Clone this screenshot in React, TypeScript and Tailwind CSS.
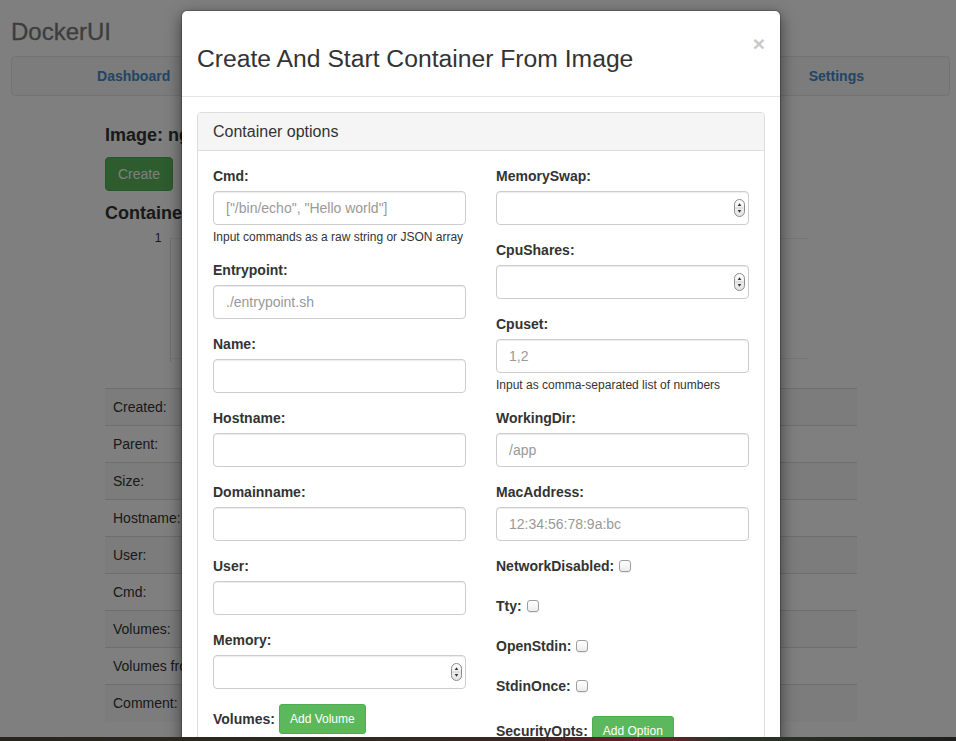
import React from 'react';

const navItems = ['Dashboard', 'Containers', 'Images', 'Settings'];
const infoRows = ['Created:', 'Parent:', 'Size:', 'Hostname:', 'User:', 'Cmd:', 'Volumes:', 'Volumes from:', 'Comment:'];

function Spinner() {
  return (
    <svg width="11" height="18" viewBox="0 0 11 18">
      <defs>
        <linearGradient id="spin" x1="0" y1="0" x2="0" y2="1">
          <stop offset="0" stopColor="#fdfdfd" />
          <stop offset="1" stopColor="#e2e2e2" />
        </linearGradient>
      </defs>
      <rect x="0.5" y="0.5" width="10" height="17" rx="5" fill="url(#spin)" stroke="#8c8c8c" />
      <line x1="1.5" y1="9" x2="9.5" y2="9" stroke="#d0d0d0" />
      <path d="M5.5 4.2 L7.3 7 L3.7 7 Z" fill="#333" />
      <path d="M5.5 13.8 L7.3 11 L3.7 11 Z" fill="#333" />
    </svg>
  );
}

function Label({ children }: { children: React.ReactNode }) {
  return <label className="block text-[14px] font-bold leading-[20px] text-[#333]">{children}</label>;
}

const inputCls =
  'block h-[34px] w-full rounded-[4px] border border-[#ccc] bg-white px-[12px] text-[14px] text-[#555] shadow-[inset_0_1px_1px_rgba(0,0,0,0.075)] outline-none placeholder:text-[#999]';

function TextField({ label, placeholder, help }: { label: string; placeholder?: string; help?: string }) {
  return (
    <div className="mb-[15px]">
      <div className="mb-[5px]">
        <Label>{label}</Label>
      </div>
      <input className={inputCls} placeholder={placeholder} />
      {help && <p className="mt-[4px] mb-[-1px] text-[12px] leading-[17px] text-[#333]">{help}</p>}
    </div>
  );
}

function NumberField({ label }: { label: string }) {
  return (
    <div className="mb-[15px]">
      <div className="mb-[5px]">
        <Label>{label}</Label>
      </div>
      <div className="flex h-[34px] w-full items-center justify-end rounded-[4px] border border-[#ccc] bg-white pr-[3px] shadow-[inset_0_1px_1px_rgba(0,0,0,0.075)]">
        <Spinner />
      </div>
    </div>
  );
}

function CheckRow({ label }: { label: string }) {
  return (
    <div className="mb-[20px] flex h-[20px] items-center">
      <Label>{label}</Label>
      <span className="ml-[5px] h-[12px] w-[12px] rounded-[3px] border border-[#9d9d9d] bg-[linear-gradient(#ffffff,#ececec)] shadow-[0_1px_1px_rgba(0,0,0,0.08)]" />
    </div>
  );
}

function AddRow({ label, button }: { label: string; button: string }) {
  return (
    <div className="mb-[15px] flex items-center">
      <Label>{label}</Label>
      <button className="ml-[4px] h-[30px] rounded-[3px] border border-[#4cae4c] bg-[#5cb85c] px-[10px] text-[12px] leading-[18px] text-white">
        {button}
      </button>
    </div>
  );
}

function Page() {
  return (
    <div className="pl-[11px] pr-[6px]">
      <div className="pt-[19px] text-[24px] leading-[26px] text-[#7a7a7a] [-webkit-text-stroke:0.3px_#7a7a7a]">DockerUI</div>
      <nav className="mt-[11px] flex h-[40px] rounded-[4px] border border-[#e7e7e7] bg-[#f8f8f8]">
        {navItems.map((item) => (
          <a key={item} className="flex flex-1 items-center justify-center pl-[9px] text-[14px] font-bold text-[#428bca]">
            {item}
          </a>
        ))}
      </nav>

      <div className="ml-[94px] w-[752px]">
        <h2 className="mt-[28px] text-[18px] font-bold leading-[22px] text-[#333]">Image: nginx:latest</h2>
        <button className="mt-[11px] h-[34px] rounded-[4px] border border-[#4cae4c] bg-[#5cb85c] px-[12px] text-[14px] text-white">
          Create
        </button>
        <h3 className="mt-[11px] text-[18px] font-bold leading-[22px] text-[#333]">Containers:</h3>

        <div className="flex h-[164px] pt-[6px]">
          <span className="w-[57px] text-right text-[12px] leading-[16px] text-[#333]">1</span>
          <svg width="695" height="158" className="ml-[8px] block">
            <line x1="1" y1="8.5" x2="638" y2="8.5" stroke="#ececec" />
            <line x1="1" y1="128.5" x2="638" y2="128.5" stroke="#ececec" />
            <line x1="1.5" y1="8" x2="1.5" y2="132" stroke="#e0e0e0" />
          </svg>
        </div>

        <table className="w-full border-collapse text-[14px] leading-[20px] text-[#333]">
          <tbody>
            {infoRows.map((r, i) => (
              <tr key={r} className={i % 2 === 0 ? 'bg-[#f9f9f9]' : ''}>
                <td className="h-[37px] border-t border-[#ddd] px-[8px]">{r}</td>
                <td className="border-t border-[#ddd] px-[8px]"></td>
              </tr>
            ))}
          </tbody>
        </table>
      </div>
    </div>
  );
}

function Modal() {
  return (
    <div className="absolute left-[181px] top-[10px] w-[600px] rounded-[6px] border border-black/20 bg-white bg-clip-padding shadow-[0_5px_15px_rgba(0,0,0,0.5)]">
      <div className="flex items-start border-b border-[#e5e5e5] px-[15px]">
        <h4 className="flex-1 pb-[24px] pt-[35px] text-[24.7px] leading-[26px] text-[#333]">Create And Start Container From Image</h4>
        <span className="mt-[22px] text-[21px] font-bold leading-[21px] text-[#c9c9c9]">×</span>
      </div>

      <div className="p-[15px]">
        <div className="rounded-[4px] border border-[#ddd]">
          <div className="rounded-t-[3px] border-b border-[#ddd] bg-[#f5f5f5] px-[15px] py-[10px] text-[16px] leading-[17px] text-[#333]">
            Container options
          </div>
          <div className="grid grid-cols-2 gap-x-[30px] p-[15px]">
            <div>
              <TextField label="Cmd:" placeholder={'["/bin/echo", "Hello world"]'} help="Input commands as a raw string or JSON array" />
              <TextField label="Entrypoint:" placeholder="./entrypoint.sh" />
              <TextField label="Name:" />
              <TextField label="Hostname:" />
              <TextField label="Domainname:" />
              <TextField label="User:" />
              <NumberField label="Memory:" />
              <AddRow label="Volumes:" button="Add Volume" />
            </div>
            <div>
              <NumberField label="MemorySwap:" />
              <NumberField label="CpuShares:" />
              <TextField label="Cpuset:" placeholder="1,2" help="Input as comma-separated list of numbers" />
              <TextField label="WorkingDir:" placeholder="/app" />
              <TextField label="MacAddress:" placeholder="12:34:56:78:9a:bc" />
              <CheckRow label="NetworkDisabled:" />
              <CheckRow label="Tty:" />
              <CheckRow label="OpenStdin:" />
              <CheckRow label="StdinOnce:" />
              <AddRow label="SecurityOpts:" button="Add Option" />
            </div>
          </div>
        </div>
      </div>
    </div>
  );
}

export default function App() {
  return (
    <div className="flex h-[741px] w-[956px] flex-col overflow-hidden font-['Liberation_Sans',Arial,sans-serif]">
      <div className="relative h-[737px] overflow-hidden bg-white">
        <Page />
        <div className="absolute inset-0 bg-black/50" />
        <Modal />
      </div>
      <div className="h-[4px] bg-[linear-gradient(90deg,#26241c_0%,#2e2a22_35%,#3a2622_55%,#6a1f28_68%,#2c3527_76%,#1f1f1c_100%)]" />
    </div>
  );
}
